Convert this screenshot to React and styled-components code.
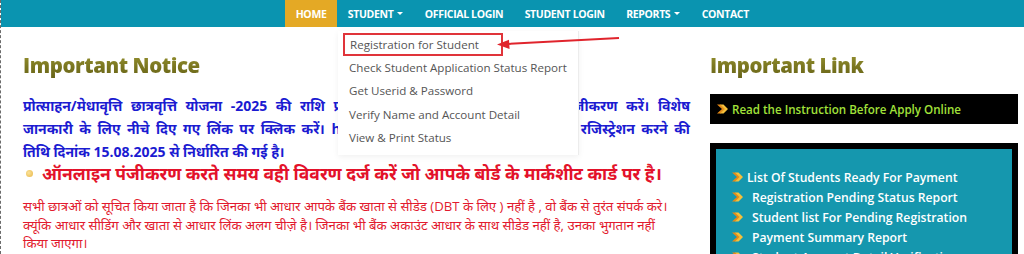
import React from 'react';
import styled, { createGlobalStyle } from 'styled-components';

const GlobalStyle = createGlobalStyle`
  html, body {
    margin: 0;
    padding: 0;
    background: #ffffff;
    font-family: "Open Sans", "Noto Sans", sans-serif;
  }
`;

const navItems = [
  { label: 'HOME', active: true },
  { label: 'STUDENT', caret: true },
  { label: 'OFFICIAL LOGIN' },
  { label: 'STUDENT LOGIN' },
  { label: 'REPORTS', caret: true },
  { label: 'CONTACT' },
];

const studentMenu = [
  'Registration for Student',
  'Check Student Application Status Report',
  'Get Userid & Password',
  'Verify Name and Account Detail',
  'View & Print Status',
];

const reportLinks = [
  'List Of Students Ready For Payment',
  'Registration Pending Status Report',
  'Student list For Pending Registration',
  'Payment Summary Report',
  'Student Account Detail Verification',
];

const blueLines = [
  'प्रोत्साहन/मेधावृत्ति छात्रवृत्ति योजना -2025 की राशि प्राप्त करने हेतु छात्र/छात्राएं ऑनलाइन पंजीकरण करें। विशेष',
  'जानकारी के लिए नीचे दिए गए लिंक पर क्लिक करें। https://medhasoft.bihar.gov.in/ पर रजिस्ट्रेशन करने की',
  'तिथि दिनांक 15.08.2025 से निर्धारित की गई है।',
];

const redLines = [
  'सभी छात्रओं को सूचित किया जाता है कि जिनका भी आधार आपके बैंक खाता से सीडेड (DBT के लिए ) नहीं है , वो बैंक से तुरंत संपर्क करे।',
  'क्यूंकि आधार सीडिंग और खाता से आधार लिंक अलग चीज़े है। जिनका भी बैंक अकाउंट आधार के साथ सीडेड नहीं है, उनका भुगतान नहीं',
  'किया जाएगा।',
];

function Bullet() {
  return (
    <svg width="11" height="10" viewBox="0 0 11 10">
      <path d="M0 0.5 L5 5 L0 9.5 L3.5 9.5 L8 5 L3.5 0.5Z" fill="#e58a18" />
      <path d="M3 0.5 L7.5 5 L3 9.5 L6.5 9.5 L11 5 L6.5 0.5Z" fill="#f7c03a" />
    </svg>
  );
}

export default function App() {
  return (
    <Page>
      <GlobalStyle />
      <NavBar>
        {navItems.map((item) => (
          <NavItem key={item.label} $active={item.active}>
            {item.label}
            {item.caret && <Caret />}
          </NavItem>
        ))}
      </NavBar>

      <Dropdown>
        {studentMenu.map((label, i) => (
          <MenuItem key={label}>
            {i === 0 ? <Highlighted>{label}</Highlighted> : label}
          </MenuItem>
        ))}
      </Dropdown>

      <Pointer width="124" height="16" viewBox="0 0 124 16">
        <line x1="10" y1="11" x2="122" y2="5" stroke="#e0242c" strokeWidth="2" />
        <path d="M0 11.6 L12 6.8 L12.6 16 Z" fill="#e0242c" />
      </Pointer>

      <Main>
        <Column>
          <Heading>Important Notice</Heading>
          <BlueText>
            {blueLines.map((line, i) => (
              <TextLine key={i} $justify={i < blueLines.length - 1}>{line}</TextLine>
            ))}
          </BlueText>
          <RedLine>
            <Dot />
            ऑनलाइन पंजीकरण करते समय वही विवरण दर्ज करें जो आपके बोर्ड के मार्कशीट कार्ड पर है।
          </RedLine>
          <RedText>
            {redLines.map((line, i) => (
              <TextLine key={i}>{line}</TextLine>
            ))}
          </RedText>
        </Column>

        <Column>
          <Heading>Important Link</Heading>
          <InstructionBox>
            <Bullet />
            Read the Instruction Before Apply Online
          </InstructionBox>
          <LinkPanel>
            {reportLinks.map((label, i) => (
              <LinkRow key={label} $tight={i === 0}>
                <Bullet />
                {label}
              </LinkRow>
            ))}
          </LinkPanel>
        </Column>
      </Main>
    </Page>
  );
}

const Page = styled.div`
  position: relative;
  height: 254px;
  overflow: hidden;
  border-left: 1px dashed #6a6a6a;
`;

const NavBar = styled.nav`
  display: flex;
  height: 27px;
  padding-left: 284px;
  background: #0a94b0;
`;

const NavItem = styled.div`
  display: flex;
  align-items: center;
  padding: 0 10.7px;
  font-size: 10.5px;
  font-weight: 700;
  letter-spacing: -0.35px;
  color: #ffffff;
  background: ${(p) => (p.$active ? '#e4a925' : 'transparent')};
`;

const Caret = styled.span`
  display: inline-block;
  margin-left: 4px;
  border-left: 3px solid transparent;
  border-right: 3px solid transparent;
  border-top: 3px solid #ffffff;
`;

const Dropdown = styled.div`
  position: absolute;
  top: 31px;
  left: 337px;
  width: 240px;
  padding: 2px 0 6px;
  background: #ffffff;
  border-right: 1px solid #ececec;
  box-shadow: 0 2px 6px rgba(0, 0, 0, 0.06);
  z-index: 10;
`;

const MenuItem = styled.div`
  height: 23.2px;
  padding: 0 11px;
  display: flex;
  align-items: center;
  font-size: 11.6px;
  color: #555555;
  white-space: nowrap;
`;

const Highlighted = styled.span`
  margin-left: -6px;
  padding: 2px 22px 2px 5px;
  border: 2px solid #e0343a;
`;

const Pointer = styled.svg`
  position: absolute;
  top: 33px;
  left: 496px;
  z-index: 11;
`;

const Main = styled.main`
  display: grid;
  grid-template-columns: 667px 308px;
  column-gap: 20px;
  padding: 23px 6px 0 22px;
`;

const Column = styled.div`
  display: flex;
  flex-direction: column;
`;

const Heading = styled.h2`
  margin: -2px 0 12px;
  font-size: 20.4px;
  line-height: 34px;
  font-weight: 800;
  letter-spacing: -0.4px;
  background: linear-gradient(180deg, #a19d36 0%, #7a7620 55%, #625e16 100%);
  -webkit-background-clip: text;
  background-clip: text;
  color: transparent;
`;

const BlueText = styled.div`
  font-size: 14px;
  line-height: 23px;
  font-weight: 700;
  color: #1b1bd1;
`;

const TextLine = styled.div`
  white-space: nowrap;
  ${(p) =>
    p.$justify &&
    `
    white-space: normal;
    text-align: justify;
    text-align-last: justify;
  `}
`;

const RedLine = styled.p`
  display: flex;
  align-items: center;
  gap: 9px;
  margin: -1px 0 0;
  padding-left: 3px;
  font-size: 17.5px;
  line-height: 23px;
  font-weight: 700;
  color: #e3122a;
  white-space: nowrap;
`;

const Dot = styled.span`
  flex: none;
  width: 7px;
  height: 7px;
  border-radius: 50%;
  background: radial-gradient(circle at 40% 40%, #fbe39a, #e8b545);
`;

const RedText = styled.div`
  margin-top: 12px;
  font-size: 13.2px;
  line-height: 18.5px;
  color: #e21a2e;
`;

const InstructionBox = styled.div`
  display: flex;
  align-items: center;
  gap: 4px;
  height: 30px;
  padding-left: 7px;
  background: #000000;
  font-size: 11.6px;
  font-weight: 600;
  color: #a2e23a;
`;

const LinkPanel = styled.div`
  margin-top: 19px;
  border: 6px solid #000000;
  background: #1597ae;
  padding: 18px 0 0 16px;
  min-height: 120px;
`;

const LinkRow = styled.div`
  display: flex;
  align-items: center;
  gap: ${(p) => (p.$tight ? '4px' : '9px')};
  height: 20px;
  font-size: 12.2px;
  font-weight: 600;
  color: #ffffff;
`;
